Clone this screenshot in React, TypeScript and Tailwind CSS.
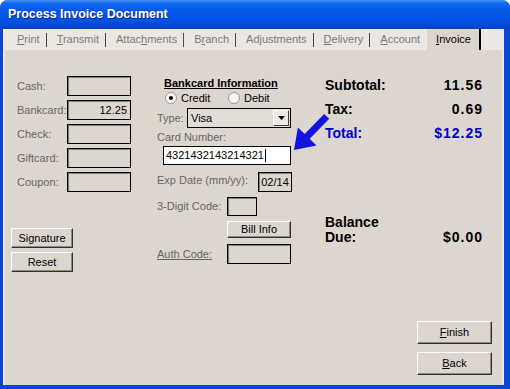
import React from "react";

function U({ t, i }: { t: string; i: number }) {
  if (i < 0) return <>{t}</>;
  return (
    <>
      {t.slice(0, i)}
      <span className="underline">{t[i]}</span>
      {t.slice(i + 1)}
    </>
  );
}

function Btn({ children, className }: { children: React.ReactNode; className: string }) {
  return (
    <div
      className={
        "flex items-center justify-center bg-[#ddd6cf] border border-t-white border-l-white border-r-[#303030] border-b-[#303030] shadow-[inset_-1px_-1px_0_#8a8a8a] text-[11px] text-black " +
        className
      }
    >
      {children}
    </div>
  );
}

function Radio({ on }: { on?: boolean }) {
  return (
    <svg width="12" height="12" viewBox="0 0 12 12">
      <circle cx="6" cy="6" r="5.5" fill="#f6f6f4" stroke="#9a9a9a" />
      {on && <circle cx="6" cy="6" r="2" fill="#000" />}
    </svg>
  );
}

const tabs: [string, number][] = [
  ["Print", 0],
  ["Transmit", 0],
  ["Attachments", 5],
  ["Branch", 1],
  ["Adjustments", -1],
  ["Delivery", 0],
];

const boxCls = "border border-black shadow-[inset_1px_1px_0_#7a7a7a] bg-[#ddd6cf]";

export default function App() {
  return (
    <div className="w-[510px] h-[389px] relative flex flex-col rounded-t-[8px] bg-[#0b45d8] overflow-hidden font-['Liberation_Sans',Arial,sans-serif]">
      {/* Title bar */}
      <div className="h-[29px] shrink-0 flex items-center pl-[8px] bg-[linear-gradient(to_bottom,#4a94f8_0%,#1068ec_12%,#0658e8_35%,#0253e2_70%,#0348d0_90%,#0b3fb8_100%)]">
        <span className="text-white font-bold text-[12.5px] [text-shadow:1px_1px_0_#0a2a8a]">
          Process Invoice Document
        </span>
      </div>

      {/* Body */}
      <div className="flex-1 flex pl-[3px] pr-[6px] pb-[4px] min-h-0">
        <div className="flex-1 flex flex-col border-l-2 border-r-2 border-[#ebe8e3] bg-[#ddd6cf]">
          {/* Tab strip */}
          <div className="h-[21px] shrink-0 flex items-stretch bg-[#ebe8e3] pl-[12px] text-[11px] text-[#7a7a7a]">
            {tabs.map(([t, i]) => (
              <div key={t} className="flex items-center">
                <span>
                  <U t={t} i={i} />
                </span>
                <span className="ml-[6px] mr-[10px] w-px h-[14px] bg-[#4a4a4a]" />
              </div>
            ))}
            <div className="flex items-center">
              <span>
                <U t="Account" i={0} />
              </span>
            </div>
            <div className="ml-[7px] flex items-center bg-[#ddd6cf] pl-[9px] pr-[8px] border-r-2 border-black text-black">
              <span>
                <U t="Invoice" i={0} />
              </span>
            </div>
          </div>

          {/* Content */}
          <div className="flex-1 flex text-[11px]">
            {/* Left column */}
            <div className="w-[152px] shrink-0 flex flex-col pl-[6px] pt-[26px]">
              <div className="ml-[6px] flex flex-col gap-[4px]">
                {["Cash:", "Bankcard:", "Check:", "Giftcard:", "Coupon:"].map((l) => (
                  <div key={l} className="flex items-center h-[20px]">
                    <span className="w-[50px] text-[#666666]">{l}</span>
                    <div className={"w-[64px] h-[20px] flex items-center justify-end pr-[3px] text-black " + boxCls}>
                      {l === "Bankcard:" ? "12.25" : ""}
                    </div>
                  </div>
                ))}
              </div>
              <div className="mt-[36px] flex flex-col gap-[4px]">
                <Btn className="w-[62px] h-[20px]">Signature</Btn>
                <Btn className="w-[62px] h-[20px]">Reset</Btn>
              </div>
            </div>

            {/* Middle column */}
            <div className="w-[168px] shrink-0 flex flex-col pt-[27px]">
              <div className="ml-[7px] font-bold underline leading-[13px] text-black">Bankcard Information</div>
              <div className="mt-[1px] h-[14px] flex items-center ml-[8px] text-black">
                <div className="w-[63px] flex items-center gap-[4px]">
                  <Radio on />
                  <span>Credit</span>
                </div>
                <div className="flex items-center gap-[4px]">
                  <Radio />
                  <span>Debit</span>
                </div>
              </div>
              <div className="mt-[3px] flex items-center">
                <span className="w-[30px] text-[#666666]">Type:</span>
                <div className="w-[104px] h-[20px] border border-black flex items-center justify-between pl-[3px] text-black bg-[#e2dcd6]">
                  <span>Visa</span>
                  <div className="w-[16px] h-[16px] mr-[1px] flex items-center justify-center bg-[#ece9e4] border border-t-white border-l-white border-r-[#404040] border-b-[#404040]">
                    <svg width="7" height="4" viewBox="0 0 7 4">
                      <polygon points="0,0 7,0 3.5,4" fill="#000" />
                    </svg>
                  </div>
                </div>
              </div>
              <div className="mt-[3px] leading-[13px] text-[#666666]">Card Number:</div>
              <div className="mt-[2px] ml-[6px] w-[128px] h-[19px] bg-white border border-black flex items-center pl-[2px] text-black">
                <span>4321432143214321</span>
                <span className="ml-[1px] w-px h-[13px] bg-black" />
              </div>
              <div className="mt-[7px] w-[135px] h-[20px] flex items-center justify-between">
                <span className="pb-[4px] text-[#666666]">Exp Date (mm/yy):</span>
                <div className={"w-[34px] h-[20px] flex items-center justify-center text-black " + boxCls}>02/14</div>
              </div>
              <div className="mt-[5px] h-[19px] flex items-center">
                <span className="w-[70px] text-[#666666]">3-Digit Code:</span>
                <div className={"w-[30px] h-[19px] " + boxCls} />
              </div>
              <Btn className="mt-[5px] ml-[70px] w-[64px] h-[17px]">Bill Info</Btn>
              <div className="mt-[6px] h-[20px] flex items-center">
                <span className="w-[70px] text-[#666666]">
                  <span className="underline">Auth Code:</span>
                </span>
                <div className={"w-[64px] h-[20px] " + boxCls} />
              </div>
            </div>

            {/* Right column */}
            <div className="flex-1 flex flex-col pt-[23px] pr-[10px] text-[14px] font-bold text-black">
              <div className="h-[24px] flex items-center justify-between pr-[9px]">
                <span>Subtotal:</span>
                <span className="tracking-[1px]">11.56</span>
              </div>
              <div className="h-[24px] flex items-center justify-between pr-[9px]">
                <span>Tax:</span>
                <span className="tracking-[1px]">0.69</span>
              </div>
              <div className="h-[24px] flex items-center justify-between pr-[9px] text-[#0000c8]">
                <span>Total:</span>
                <span className="tracking-[1px]">$12.25</span>
              </div>
              <div className="mt-[70px] leading-[15px]">
                <div>Balance</div>
                <div className="flex justify-between pr-[9px]">
                  <span>Due:</span>
                  <span className="tracking-[1px]">$0.00</span>
                </div>
              </div>
              <div className="mt-[76px] flex flex-col items-end gap-[8px] font-normal">
                <Btn className="w-[75px] h-[23px]">
                  <U t="Finish" i={0} />
                </Btn>
                <Btn className="w-[75px] h-[23px]">
                  <U t="Back" i={0} />
                </Btn>
              </div>
            </div>
          </div>
        </div>
      </div>

      {/* Blue arrow overlay */}
      <svg className="absolute left-[288px] top-[112px]" width="44" height="42" viewBox="0 0 44 42">
        <polygon
          points="6,38 28.5,33.4 21.7,26.8 41.2,6.7 36.2,1.9 16.7,22 9.9,15.4"
          fill="#1414e0"
        />
      </svg>
    </div>
  );
}
